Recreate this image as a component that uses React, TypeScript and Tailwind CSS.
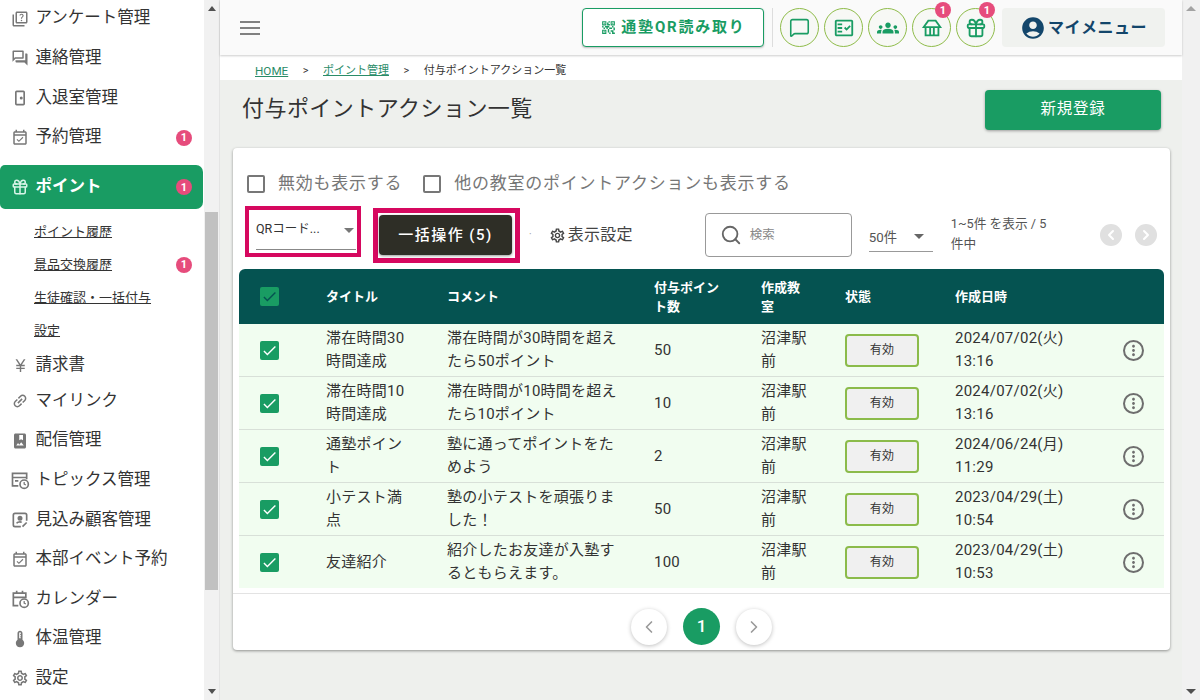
import { ChevronLeft, ChevronRight, Gift, MessageSquare, Search } from "lucide-react";
import {
  MdAccountCircle,
  MdCheck,
  MdCurrencyYen,
  MdMoreVert,
  MdOutlineEventAvailable,
  MdOutlineFactCheck,
  MdOutlineForum,
  MdOutlineLink,
  MdOutlineQrCode2,
  MdOutlineQuiz,
  MdOutlineSettings,
  MdPhotoAlbum,
  MdGroups,
  MdThermostat,
  MdArrowDropDown,
} from "react-icons/md";

const font = "font-['Roboto','Noto_Sans_CJK_JP',sans-serif]";

function TopicIcon() {
  return (
    <svg viewBox="0 0 24 24" className="h-5 w-5" fill="none" stroke="currentColor" strokeWidth="2">
      <path d="M10 19H3V4h17v7M3 9h17M6 13h4" />
      <circle cx="17" cy="17" r="5" />
      <path d="M17 14.5V17l2 1" strokeWidth="1.5" />
    </svg>
  );
}

function ProspectIcon() {
  return (
    <svg viewBox="0 0 24 24" className="h-5 w-5" fill="none" stroke="currentColor" strokeWidth="2">
      <path d="M13 20H6a2 2 0 0 1-2-2V6a2 2 0 0 1 2-2h12a2 2 0 0 1 2 2v7" />
      <circle cx="12" cy="10" r="2" fill="currentColor" />
      <path d="M8 16c1-2 5-2 6-1M15 20l5-5" />
    </svg>
  );
}

function CalendarClockIcon() {
  return (
    <svg viewBox="0 0 24 24" className="h-5 w-5" fill="none" stroke="currentColor" strokeWidth="2">
      <path d="M10 20H4V5h15v6M4 10h15M8 2v4M15 2v4" />
      <circle cx="17" cy="17" r="5" />
      <path d="M17 14.5V17l2 1" strokeWidth="1.5" />
    </svg>
  );
}

function DoorIcon() {
  return (
    <svg viewBox="0 0 24 24" className="h-5 w-5" fill="none" stroke="currentColor" strokeWidth="2">
      <rect x="7" y="4" width="10" height="16" rx="1" />
      <circle cx="13.5" cy="12" r="0.8" fill="currentColor" />
    </svg>
  );
}

function BasketIcon() {
  return (
    <svg viewBox="0 0 24 24" className="h-[22px] w-[22px]" fill="none" stroke="currentColor" strokeWidth="2">
      <path d="M3 11l5-7h8l5 7zM5 11v9h14v-9M10 11v9M14 11v9" />
    </svg>
  );
}

function Hamburger() {
  return (
    <svg viewBox="0 0 20 14" className="h-[14px] w-[20px]" stroke="#808080" strokeWidth="2">
      <path d="M0 1h20M0 7h20M0 13h20" />
    </svg>
  );
}

function Badge() {
  return (
    <span className="flex h-4 w-4 items-center justify-center rounded-full bg-[#e64c7c] text-[11px] font-bold leading-none text-white">
      1
    </span>
  );
}

function NavItem({ icon, label, badge }: { icon: React.ReactNode; label: string; badge?: boolean }) {
  return (
    <div className="flex h-[39.6px] items-center pl-[8px] pr-[12px] text-[16.5px] text-[#333]">
      <span className="flex w-[27.5px] justify-center pr-[3px] text-[#777]">{icon}</span>
      <span className="flex-1 whitespace-nowrap">{label}</span>
      {badge && <Badge />}
    </div>
  );
}

function SubItem({ label, badge }: { label: string; badge?: boolean }) {
  return (
    <div className="flex h-[33px] items-center pl-[34px] pr-[12px] text-[13px] text-[#333]">
      <span className="flex-1 whitespace-nowrap underline">{label}</span>
      {badge && <Badge />}
    </div>
  );
}

function Sidebar() {
  return (
    <div className="flex h-[700px] w-[220px] shrink-0 border-r border-[#e4e4e4] bg-white">
      <nav className="-mt-[1px] w-[204px] overflow-hidden">
        <NavItem icon={<MdOutlineQuiz size={18} />} label="アンケート管理" />
        <NavItem icon={<MdOutlineForum size={18} />} label="連絡管理" />
        <NavItem icon={<DoorIcon />} label="入退室管理" />
        <NavItem icon={<MdOutlineEventAvailable size={18} />} label="予約管理" badge />
        <div className="mr-[1px] mt-[8px] flex h-[44px] items-center rounded-r-[7px] rounded-l-[5px] bg-[#199c63] pl-[8px] pr-[11px] text-[16.5px] font-bold text-white">
          <span className="flex w-[27.5px] justify-center pr-[3px] text-[#d8f5e8]">
            <Gift size={18} />
          </span>
          <span className="flex-1">ポイント</span>
          <Badge />
        </div>
        <div className="mt-[6px]">
          <SubItem label="ポイント履歴" />
          <SubItem label="景品交換履歴" badge />
          <SubItem label="生徒確認・一括付与" />
          <SubItem label="設定" />
        </div>
        <div className="-mt-[2px]">
          <NavItem icon={<MdCurrencyYen size={17} />} label="請求書" />
        </div>
        <div className="-mt-[3.5px]">
          <NavItem icon={<MdOutlineLink size={18} className="-rotate-45" />} label="マイリンク" />
        </div>
        <NavItem icon={<MdPhotoAlbum size={18} />} label="配信管理" />
        <NavItem icon={<TopicIcon />} label="トピックス管理" />
        <NavItem icon={<ProspectIcon />} label="見込み顧客管理" />
        <NavItem icon={<MdOutlineEventAvailable size={18} />} label="本部イベント予約" />
        <NavItem icon={<CalendarClockIcon />} label="カレンダー" />
        <NavItem icon={<MdThermostat size={20} />} label="体温管理" />
        <NavItem icon={<MdOutlineSettings size={18} />} label="設定" />
      </nav>
      <div className="flex w-[15px] flex-col items-center bg-[#f1f1f1]">
        <div className="mt-[6px] h-0 w-0 border-x-[4px] border-b-[5px] border-x-transparent border-b-[#505050]" />
        <div className="mt-[201px] h-[378px] w-[13px] bg-[#c1c1c1]" />
        <div className="mt-auto mb-[6px] h-0 w-0 border-x-[4px] border-t-[5px] border-x-transparent border-t-[#505050]" />
      </div>
    </div>
  );
}

function Header() {
  const circle =
    "relative flex h-[39px] w-[39px] items-center justify-center rounded-full border border-[#8fbc4a] bg-[#f7f8f5] text-[#199c63]";
  const pip =
    "absolute -top-[7px] right-[-1px] flex h-4 w-4 items-center justify-center rounded-full bg-[#e64c7c] text-[11px] font-bold leading-none text-white";
  return (
    <header className="relative z-10 flex h-[55px] items-center bg-[#fafafa] pl-[20px] pr-[17px] shadow-[0_1px_2px_rgba(0,0,0,0.2)]">
      <Hamburger />
      <div className="ml-auto flex h-[39px] w-[182px] items-center justify-center gap-[4px] rounded-[4px] border border-[#199c63] bg-white text-[15px] font-bold tracking-[1.8px] text-[#199c63] shadow-[0_1px_2px_rgba(0,0,0,0.25)]">
        <MdOutlineQrCode2 size={17} />
        通塾QR読み取り
      </div>
      <div className="ml-[8px] mr-[7px] h-[39px] w-px bg-[#ddd]" />
      <div className="flex gap-[5px]">
        <div className={circle}>
          <MessageSquare size={21} strokeWidth={1.8} />
        </div>
        <div className={circle}>
          <MdOutlineFactCheck size={22} />
        </div>
        <div className={circle}>
          <MdGroups size={22} />
        </div>
        <div className={circle}>
          <BasketIcon />
          <span className={pip}>1</span>
        </div>
        <div className={circle}>
          <Gift size={22} strokeWidth={2} />
          <span className={pip}>1</span>
        </div>
      </div>
      <div className="ml-[7px] flex h-[39px] w-[163px] items-center justify-center gap-[2px] rounded-[4px] bg-[#f0f2ef] text-[16px] font-bold tracking-[0.5px] text-[#13466b]">
        <MdAccountCircle size={26} />
        マイメニュー
      </div>
    </header>
  );
}

function Breadcrumb() {
  return (
    <div className="flex h-[25px] items-center gap-[14.5px] bg-white pl-[35px] pt-[8px] text-[11px] text-[#333]">
      <span className="text-[11.7px] text-[#2a8c68] underline">HOME</span>
      <span>&gt;</span>
      <span className="text-[#2a8c68] underline">ポイント管理</span>
      <span>&gt;</span>
      <span>付与ポイントアクション一覧</span>
    </div>
  );
}

type Row = { title: string; comment: string; points: number; date: string; time: string };

const rows: Row[] = [
  { title: "滞在時間30\n時間達成", comment: "滞在時間が30時間を超え\nたら50ポイント", points: 50, date: "2024/07/02(火)", time: "13:16" },
  { title: "滞在時間10\n時間達成", comment: "滞在時間が10時間を超え\nたら10ポイント", points: 10, date: "2024/07/02(火)", time: "13:16" },
  { title: "通塾ポイン\nト", comment: "塾に通ってポイントをた\nめよう", points: 2, date: "2024/06/24(月)", time: "11:29" },
  { title: "小テスト満\n点", comment: "塾の小テストを頑張りま\nした！", points: 50, date: "2023/04/29(土)", time: "10:54" },
  { title: "友達紹介", comment: "紹介したお友達が入塾す\nるともらえます。", points: 100, date: "2023/04/29(土)", time: "10:53" },
];

const gridCols = "grid grid-cols-[87px_121px_207px_107px_84px_110px_1fr] items-center";

function Checkbox({ header }: { header?: boolean }) {
  return (
    <span className="ml-[21px] flex h-[19px] w-[19px] items-center justify-center rounded-[2px] bg-[#199c63]">
      <MdCheck size={17} className={header ? "text-[#055351]" : "text-white"} />
    </span>
  );
}

function ActionTable() {
  return (
    <div className="mx-[6px] mt-[6px]">
      <div className={`${gridCols} h-[55px] rounded-t-[6px] bg-[#055351] text-[13px] font-bold leading-[19px] text-white`}>
        <Checkbox header />
        <span>タイトル</span>
        <span>コメント</span>
        <span className="whitespace-pre-line">{"付与ポイン\nト数"}</span>
        <span className="whitespace-pre-line">{"作成教\n室"}</span>
        <span>状態</span>
        <span>作成日時</span>
      </div>
      {rows.map((row, i) => (
        <div
          key={i}
          className={`${gridCols} h-[53px] border-b border-[#d8e0d8] bg-[#f1fdf0] text-[15px] leading-[23px] tracking-[0.25px] text-[#333] last:h-[52px] last:border-b-0`}
        >
          <Checkbox />
          <span className="whitespace-pre-line">{row.title}</span>
          <span className="whitespace-pre-line">{row.comment}</span>
          <span>{row.points}</span>
          <span className="whitespace-pre-line">{"沼津駅\n前"}</span>
          <span className="flex h-[33px] w-[74px] items-center justify-center rounded-[4px] border-2 border-[#8bbb4a] bg-[#f0f0f0] text-[12px]">
            有効
          </span>
          <div className="flex items-center justify-between pr-[20px]">
            <span>
              {row.date}
              <br />
              {row.time}
            </span>
            <span className="flex h-[21px] w-[21px] items-center justify-center rounded-full border-2 border-[#6e6e6e] text-[#6e6e6e]">
              <MdMoreVert size={17} />
            </span>
          </div>
        </div>
      ))}
    </div>
  );
}

function Pagination() {
  const round =
    "flex h-9 w-9 items-center justify-center rounded-full bg-white text-[#9a9a9a] shadow-[0_1px_4px_rgba(0,0,0,0.25)]";
  return (
    <div className="mt-[5px] flex items-center justify-center gap-4 border-t border-[#e3e3e3] pt-[14px]">
      <span className={round}>
        <ChevronLeft size={20} />
      </span>
      <span className="flex h-[37px] w-[37px] items-center justify-center rounded-full bg-[#199c63] text-[17px] font-medium text-white">
        1
      </span>
      <span className={round}>
        <ChevronRight size={20} />
      </span>
    </div>
  );
}

function Toolbar() {
  return (
    <div className="flex items-start pl-[12px]">
      <div className="flex h-[51px] w-[116px] border-[4px] border-[#d6085f] pl-[7px] pr-[1px]">
        <div className="flex h-[40px] flex-1 items-center justify-between border-b border-[#888] text-[12.5px] text-[#333]">
          QRコード...
          <MdArrowDropDown size={24} className="-mr-[5px] shrink-0 text-[#777]" />
        </div>
      </div>
      <div className="ml-[12px] mt-[2px] border-[5px] border-[#d6085f] pb-[3px] pl-[1px] pr-[3px] pt-[2px]">
        <div className="flex h-[40px] w-[133px] items-center justify-center rounded-[4px] bg-[#2e2e26] text-[15px] font-medium tracking-[1.5px] text-white shadow-[0_1px_3px_rgba(0,0,0,0.4)]">
          一括操作 (5)
        </div>
      </div>
      <span className="ml-[9px] mt-[21px] text-[10px] text-[#999]">·</span>
      <div className="ml-[17px] mt-[17px] flex items-center gap-[2px] text-[16px] tracking-[0.3px] text-[#444]">
        <MdOutlineSettings size={17} />
        表示設定
      </div>
      <div className="ml-[72px] mt-[7px] flex h-[44px] w-[147px] items-center rounded-[4px] border border-[#999] pl-[14px] text-[12.5px] text-[#888]">
        <Search size={22} className="text-[#666]" />
        <span className="ml-[8px]">検索</span>
      </div>
      <div className="ml-[17px] mt-[14px] flex h-[32px] w-[64px] items-center justify-between border-b border-[#999] text-[13.3px] text-[#555]">
        <span className="mt-[4px]">50件</span>
        <MdArrowDropDown size={24} className="mr-[2px] text-[#666]" />
      </div>
      <div className="ml-[18px] mt-[8px] w-[110px] whitespace-pre-line text-[12.7px] leading-[20px] text-[#555]">
        {"1~5件 を表示 / 5\n件中"}
      </div>
      <div className="ml-[39px] mt-[18px] flex gap-[13px]">
        <span className="flex h-[22px] w-[22px] items-center justify-center rounded-full bg-[#e0e0e0] text-white">
          <ChevronLeft size={16} strokeWidth={3} />
        </span>
        <span className="flex h-[22px] w-[22px] items-center justify-center rounded-full bg-[#e0e0e0] text-white">
          <ChevronRight size={16} strokeWidth={3} />
        </span>
      </div>
    </div>
  );
}

function Filters() {
  const box = "h-[18px] w-[18px] rounded-[2px] border-2 border-[#777]";
  return (
    <div className="flex h-[24px] items-center pl-[14px] pt-[1px] text-[17px] tracking-[0.75px] text-[#777]">
      <span className={box} />
      <span className="ml-[13px]">無効も表示する</span>
      <span className={`${box} ml-[21px]`} />
      <span className="ml-[13px]">他の教室のポイントアクションも表示する</span>
    </div>
  );
}

export default function App() {
  return (
    <div className={`${font} flex h-[700px] w-[1200px] overflow-hidden bg-[#eef0ed]`}>
      <Sidebar />
      <main className="flex min-w-0 flex-1 flex-col">
        <Header />
        <Breadcrumb />
        <div className="flex h-[68px] items-start justify-between pl-[22px] pr-[21px] pt-[10px]">
          <h1 className="mt-[2px] text-[22px] font-normal tracking-[0.45px] text-[#333]">付与ポイントアクション一覧</h1>
          <div className="flex h-[40px] w-[176px] items-center justify-center rounded-[4px] bg-[#199c63] text-[15.5px] tracking-[0.7px] text-white shadow-[0_1px_3px_rgba(0,0,0,0.35)]">
            新規登録
          </div>
        </div>
        <section className="ml-[13px] mr-[12px] h-[502px] rounded-[4px] bg-white pt-[23px] shadow-[0_1px_3px_rgba(0,0,0,0.4)]">
          <Filters />
          <div className="mt-[11px]">
            <Toolbar />
          </div>
          <ActionTable />
          <Pagination />
        </section>
      </main>
      <div className="flex w-[18px] shrink-0 flex-col items-center bg-[#f1f1f1]">
        <div className="mt-[6px] h-0 w-0 border-x-[5px] border-b-[5px] border-x-transparent border-b-[#a3a3a3]" />
        <div className="mt-auto mb-[6px] h-0 w-0 border-x-[5px] border-t-[5px] border-x-transparent border-t-[#505050]" />
      </div>
    </div>
  );
}
